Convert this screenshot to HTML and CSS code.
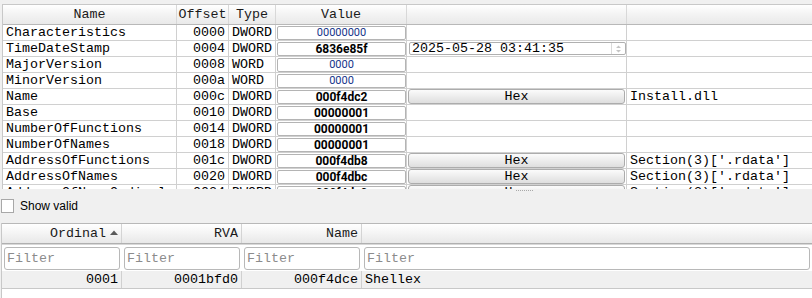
FILE: index.html
```html
<!doctype html>
<html lang="en">
<head>
  <meta charset="UTF-8" />
  <title>Export directory</title>
  <link rel="stylesheet" href="styles.css">
</head>
<body>

  <div class="struct">
    <div class="row head">
      <div class="cell center">Name</div>
      <div class="cell center">Offset</div>
      <div class="cell center">Type</div>
      <div class="cell center">Value</div>
      <div class="cell"></div>
      <div class="cell last"></div>
    </div>

    <div class="row">
      <div class="cell">Characteristics</div>
      <div class="cell right">0000</div>
      <div class="cell">DWORD</div>
      <div class="cell"><span class="val">00000000</span></div>
      <div class="cell"></div>
      <div class="cell last"></div>
    </div>
    <div class="row">
      <div class="cell">TimeDateStamp</div>
      <div class="cell right">0004</div>
      <div class="cell">DWORD</div>
      <div class="cell"><span class="val bold">6836e85f</span></div>
      <div class="cell">
        <span class="spin">2025-05-28 03:41:35
          <span class="arrows">
            <svg width="5" height="8" viewBox="0 0 5 8"><path d="M0 3 L2.5 0.5 L5 3 Z M0 5 L2.5 7.5 L5 5 Z" fill="#c4c4c4"/></svg>
          </span>
        </span>
      </div>
      <div class="cell last"></div>
    </div>
    <div class="row">
      <div class="cell">MajorVersion</div>
      <div class="cell right">0008</div>
      <div class="cell">WORD</div>
      <div class="cell"><span class="val">0000</span></div>
      <div class="cell"></div>
      <div class="cell last"></div>
    </div>
    <div class="row">
      <div class="cell">MinorVersion</div>
      <div class="cell right">000a</div>
      <div class="cell">WORD</div>
      <div class="cell"><span class="val">0000</span></div>
      <div class="cell"></div>
      <div class="cell last"></div>
    </div>
    <div class="row">
      <div class="cell">Name</div>
      <div class="cell right">000c</div>
      <div class="cell">DWORD</div>
      <div class="cell"><span class="val bold">000f4dc2</span></div>
      <div class="cell"><span class="hexbtn">Hex</span></div>
      <div class="cell last">Install.dll</div>
    </div>
    <div class="row">
      <div class="cell">Base</div>
      <div class="cell right">0010</div>
      <div class="cell">DWORD</div>
      <div class="cell"><span class="val bold">00000001</span></div>
      <div class="cell"></div>
      <div class="cell last"></div>
    </div>
    <div class="row">
      <div class="cell">NumberOfFunctions</div>
      <div class="cell right">0014</div>
      <div class="cell">DWORD</div>
      <div class="cell"><span class="val bold">00000001</span></div>
      <div class="cell"></div>
      <div class="cell last"></div>
    </div>
    <div class="row">
      <div class="cell">NumberOfNames</div>
      <div class="cell right">0018</div>
      <div class="cell">DWORD</div>
      <div class="cell"><span class="val bold">00000001</span></div>
      <div class="cell"></div>
      <div class="cell last"></div>
    </div>
    <div class="row">
      <div class="cell">AddressOfFunctions</div>
      <div class="cell right">001c</div>
      <div class="cell">DWORD</div>
      <div class="cell"><span class="val bold">000f4db8</span></div>
      <div class="cell"><span class="hexbtn">Hex</span></div>
      <div class="cell last">Section(3)['.rdata']</div>
    </div>
    <div class="row">
      <div class="cell">AddressOfNames</div>
      <div class="cell right">0020</div>
      <div class="cell">DWORD</div>
      <div class="cell"><span class="val bold">000f4dbc</span></div>
      <div class="cell"><span class="hexbtn">Hex</span></div>
      <div class="cell last">Section(3)['.rdata']</div>
    </div>
    <div class="row">
      <div class="cell">AddressOfNameOrdinals</div>
      <div class="cell right">0024</div>
      <div class="cell">DWORD</div>
      <div class="cell"><span class="val bold">000f4dc0</span></div>
      <div class="cell"><span class="hexbtn">Hex</span></div>
      <div class="cell last">Section(3)['.rdata']</div>
    </div>
  </div>

  <div class="splitter"><span class="grip"></span></div>

  <div class="options">
    <span class="checkbox"></span>
    <span class="label">Show valid</span>
  </div>

  <div class="exports">
    <div class="erow ehead">
      <div class="ecell right">Ordinal
        <svg class="sort" width="8" height="5" viewBox="0 0 8 5"><path d="M0 5 L4 0.5 L8 5 Z" fill="#5a5a5a"/></svg>
      </div>
      <div class="ecell right">RVA</div>
      <div class="ecell right">Name</div>
      <div class="ecell last"></div>
    </div>
    <div class="erow filters">
      <div class="fcell"><input class="filter" placeholder="Filter" /></div>
      <div class="fcell"><input class="filter" placeholder="Filter" /></div>
      <div class="fcell"><input class="filter" placeholder="Filter" /></div>
      <div class="fcell last"><input class="filter" placeholder="Filter" /></div>
    </div>
    <div class="erow data">
      <div class="ecell right">0001</div>
      <div class="ecell right">0001bfd0</div>
      <div class="ecell right">000f4dce</div>
      <div class="ecell last">Shellex</div>
    </div>
  </div>

</body>
</html>
```

FILE: styles.css
```css
body {
  margin: 0;
  background: #f0f0f0;
  font-family: "Liberation Mono", "DejaVu Sans Mono", monospace;
  font-size: 13.33px;
  color: #000;
  height: 298px;
  overflow: hidden;
  display: flex;
  flex-direction: column;
}

/* upper structure view */
.struct {
  margin: 4px 0 0 2px;
  height: 185px;
  overflow: hidden;
  background: #fff;
  border-left: 1px solid #c8c8c8;
}

.row {
  display: grid;
  grid-template-columns: 174px 52px 47px 131px 220px 1fr;
  height: 16px;
  border-bottom: 1px solid #d0d0d0;
  box-sizing: border-box;
}

.row.head {
  height: 21px;
  border-top: 1px solid #c8c8c8;
  border-bottom: 1px solid #b8b8b8;
  background: linear-gradient(#ffffff, #f4f4f4 45%, #e9e9e9);
}

.cell {
  border-right: 1px solid #d0d0d0;
  padding: 0 3px;
  line-height: 15px;
  white-space: nowrap;
  overflow: hidden;
  display: flex;
  align-items: center;
}

.head .cell {
  line-height: 19px;
  border-right-color: #d8d8d8;
  color: #1a1a1a;
}

.cell.last {
  border-right: none;
}

.center { justify-content: center; }
.right { justify-content: flex-end; }

.row .cell:nth-child(4),
.row .cell:nth-child(5) {
  padding: 0;
}

.val {
  flex: 1;
  margin: 1px 0 0 1px;
  height: 14px;
  box-sizing: border-box;
  border: 1px solid #b4b4b4;
  border-radius: 2px;
  background: #fff;
  font-family: Roboto, "Liberation Sans", sans-serif;
  font-size: 11px;
  line-height: 12px;
  color: #14348a;
  text-align: center;
  align-self: flex-start;
}

.val.bold {
  font-weight: bold;
  font-size: 12px;
  color: #000;
}

.hexbtn {
  flex: 1;
  margin: 0 1px;
  height: 15px;
  box-sizing: border-box;
  border: 1px solid #acacac;
  border-radius: 3px;
  background: linear-gradient(#fbfbfb, #ebebeb 55%, #dedede);
  text-align: center;
  line-height: 13px;
}

.spin {
  flex: 1;
  margin: 1px 0 0 2px;
  height: 13px;
  box-sizing: border-box;
  border: 1px solid #b0b0b0;
  border-radius: 2px;
  background: #fff;
  padding-left: 2px;
  line-height: 11px;
  display: flex;
  align-items: center;
  align-self: flex-start;
}

.arrows {
  margin-left: auto;
  width: 13px;
  height: 11px;
  border-left: 1px solid #dadada;
  display: flex;
  align-items: center;
  justify-content: center;
}

/* splitter */
.splitter {
  height: 6px;
}

.grip {
  display: block;
  margin: 1px 0 0 516px;
  width: 17px;
  border-top: 1px dotted #a8a8a8;
}

.options {
  display: flex;
  align-items: center;
  gap: 6px;
  height: 22px;
  margin-bottom: 6px;
  padding-left: 1px;
  font-family: "Liberation Sans", Arial, sans-serif;
  font-size: 12px;
}

.checkbox {
  width: 13px;
  height: 14px;
  box-sizing: border-box;
  border: 1px solid #a8a8a8;
  background: #fff;
}

/* lower exports view */
.exports {
  flex: 1;
  margin-left: 1px;
  background: #fff;
  border-left: 1px solid #c8c8c8;
}

.erow {
  display: grid;
  grid-template-columns: 120px 120px 120px 1fr;
  box-sizing: border-box;
}

.ehead {
  height: 21px;
  border-top: 1px solid #b8b8b8;
  border-bottom: 1px solid #b0b0b0;
  background: linear-gradient(#ffffff, #f5f5f5 45%, #e8e8e8);
}

.ecell {
  border-right: 1px solid #d4d4d4;
  padding: 0 3px;
  display: flex;
  align-items: center;
  white-space: nowrap;
  overflow: hidden;
}

.ehead .ecell {
  color: #1a1a1a;
}

.ecell.last,
.fcell.last {
  border-right: none;
}

.sort {
  margin-left: 4px;
  margin-bottom: 3px;
}

.filters {
  height: 27px;
  border-top: 1px solid #d8d8d8;
}

.fcell {
  padding: 2px 2px 0 2px;
}

.filter {
  display: block;
  width: 100%;
  height: 23px;
  box-sizing: border-box;
  margin: 0;
  border: 1px solid #b8b8b8;
  border-radius: 3px;
  padding: 0 2px;
  font-family: "Liberation Mono", "DejaVu Sans Mono", monospace;
  font-size: 13.33px;
  background: #fff;
  outline: none;
}

.filter::placeholder {
  color: #8c8c8c;
}

.data {
  height: 18px;
  background: #f0f0f0;
  border-bottom: 1px solid #c8c8c8;
}

.data .ecell {
  border-right-color: #d0d0d0;
}
```
